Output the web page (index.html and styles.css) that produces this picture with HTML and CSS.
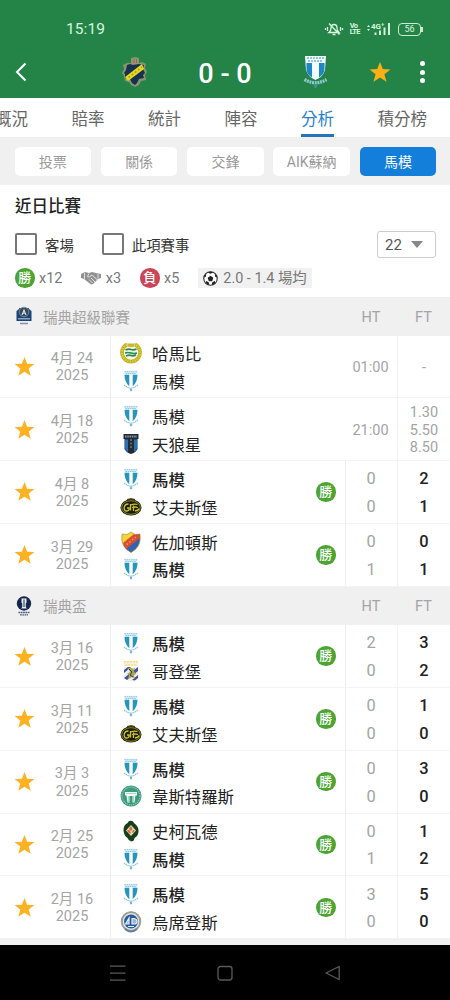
FILE: index.html
```html
<!DOCTYPE html>
<html lang="zh-Hant">
<head>
    <meta charset="UTF-8">
    <meta content="width=device-width, initial-scale=1.0" name="viewport">
    <title>分析</title>
    <link rel="stylesheet" href="styles.css">
</head>
<body>
<svg class="sprite">
    <symbol id="star" viewBox="0 0 24 24">
        <path d="M12 1l3 7.8 8.4.4-6.6 5.2 2.3 8.1L12 17.900l-7.100 4.600 2.300-8.100L.6 9.200 9 8.800z"/>
    </symbol>
    <symbol id="malmo" viewBox="0 0 22 22">
        <path d="M4 .8h14l-1 4H5z" fill="#e4f3fa"/>
        <path d="M4.500 1.800h13M5.500 3.600h11" stroke="#63b3d6" stroke-width=".8" stroke-dasharray="1.500 .7"/>
        <path d="M4 4.500h14q.3 8.500-7 13Q3.700 13 4 4.500z" fill="#fff"/>
        <path d="M4.500 4.800h4.800v11.400Q4.500 12.500 4.500 4.800zM12.700 4.800h4.800q0 7.700-4.800 11.400z" fill="#2795ba"/>
        <path d="M4 15q7 6 14 0" fill="none" stroke="#86c2dc" stroke-width="1.200" stroke-dasharray="1.400 .6"/>
        <path d="M11 18.300v3M9.800 20h2.400" stroke="#4b9fc6"/>
    </symbol>
    <symbol id="hammarby" viewBox="0 0 22 22">
        <path d="M7 2.500A9 9 0 1 0 15 2.500" fill="none" stroke="#bdae20" stroke-width="3.800"/>
        <path d="M7 2.500A9 9 0 1 0 15 2.500" fill="none" stroke="#d8cb45" stroke-width="2.600" stroke-dasharray="1.500 1"/>
        <circle cx="11" cy="10.500" r="6.400" fill="#f3f5df"/>
        <path d="M5.500 8q3-1.500 5.500-.5t5.500-.5M5 11q3-1 6 0t6 0M6 14q3-1.500 5-.5t5-.5" fill="none" stroke="#268957" stroke-width="1.700"/>
        <path d="M7 1.500h8l-1.500 3.500h-5z" fill="#c7b82d"/>
    </symbol>
    <symbol id="sirius" viewBox="0 0 22 22">
        <path d="M3.500 1h15v5h-1v10q-2 4-6.500 5-4.500-1-6.500-5V6h-1z" fill="#222c38"/>
        <path d="M5 6.500h3v12.500Q5 17.500 5 15zM14 6.500h3V15q0 2.500-3 4z" fill="#2770ba"/>
        <path d="M5 3.500h12" stroke="#8d9aa5" stroke-width="1.800" stroke-dasharray="1.500 .8"/>
        <path d="M11 6v10" stroke="#7a7465" stroke-width="1.500" stroke-dasharray="2 1.500"/>
    </symbol>
    <symbol id="elfsborg" viewBox="0 0 22 22">
        <path d="M7 3l4-1 4 1v3H7z" fill="#504d12"/>
        <ellipse cx="11" cy="11.500" rx="10.500" ry="8" fill="#1b1d0b"/>
        <ellipse cx="11" cy="11.500" rx="9.300" ry="6.800" fill="none" stroke="#a9a32b" stroke-width=".8"/>
        <path d="M8.500 8C3 8 3 15.500 7 15q2.500-.3 2-3H7M10.500 8v6.500M10.500 9q4-1.500 7-.5M12 11.500q3-1 6 0M13.500 15V9.500m1.500 5.500q3.500-.5 4-2.500" fill="none" stroke="#cdc430" stroke-width="1.300"/>
    </symbol>
    <symbol id="djurgarden" viewBox="0 0 22 22">
        <path d="M2 3l5 .5L11 1l4 2.500 5-.5q2 13-9 18.500Q0 16 2 3z" fill="#f5d72f"/>
        <path d="M20 6q.5 10-9 15.500Q6.500 19 4.500 15.500z" fill="#2e64b0"/>
        <path d="M14 3l1 .5 5-.5v4L6 18Q3.500 15 3 12z" fill="#dc4b33"/>
        <path d="M6.500 13.500L16 6" stroke="#e8a046" stroke-width="1.600" stroke-dasharray="1.500 2"/>
        <path d="M2 3l5 .5L11 1l4 2.500 5-.5q2 13-9 18.500Q0 16 2 3z" fill="none" stroke="#9a7c45" stroke-width=".6"/>
    </symbol>
    <symbol id="goteborg" viewBox="0 0 22 22">
        <path d="M4 1h14v5H4z" fill="#fbf3cf"/>
        <path d="M4 1.800h14M5 5h12" stroke="#ecd07c" stroke-width="1" stroke-dasharray="2 1"/>
        <path d="M4 7h14v10q-1 3-7 4-6-1-7-4z" fill="#eef0f8"/>
        <path d="M4 10l4-3h3l-7 6zM4 18l14-11v4L7 20zM12 20l6-5v3l-3 2.500z" fill="#41519b"/>
        <path d="M8 8q3-1 5 1l2-1-1 3 2 3-2 1 1 4-3-2-4 2 1-4-2-1 3-2z" fill="#a9a64c"/>
        <path d="M9 9l3 3-2 3 3 2" fill="none" stroke="#39405c"/>
    </symbol>
    <symbol id="vsk" viewBox="0 0 22 22">
        <circle cx="11" cy="11" r="10.500" fill="#3d9b7d"/>
        <circle cx="11" cy="11" r="8.900" fill="none" stroke="#8fc9b3" stroke-width="1.300" stroke-dasharray="1.200 .9"/>
        <path d="M5 7h12v3.500h-1.500l-1 7h-2v-6.500h-3v6.500h-2l-1-7H5z" fill="#f1faf6"/>
        <path d="M6 8.500h10M8.500 11v6M13.500 11v6" stroke="#8ac5b0" stroke-width=".7"/>
    </symbol>
    <symbol id="skovde" viewBox="0 0 22 22">
        <path d="M9 1q4-1 5 2 4.500 3 4.500 8t-4 7q0 3-3 3.500-3-.5-4-3.500-4-3-4-8t4-7z" fill="#164018"/>
        <path d="M11 5l5 5.500-5 5.500-5-5.500z" fill="#e8d4b5"/>
        <path d="M11 6l1.500 3-1.500 2-2-2zM13 10l2 .5-2 2.500-1-1zM7 10h2.500l1.500 3-2 .5z" fill="#cf6e43"/>
    </symbol>
    <symbol id="orebro" viewBox="0 0 22 22">
        <circle cx="11" cy="10.500" r="9.300" fill="#dfe3e6" stroke="#8798a9" stroke-width="1.800"/>
        <circle cx="11" cy="10.500" r="9.500" fill="none" stroke="#bda66b" stroke-width="1.200" stroke-dasharray="2 2"/>
        <circle cx="11" cy="10.500" r="6.900" fill="#285999"/>
        <path d="M5.500 13L9 7v6zM12 7.500h2q3 .5 3 3t-3 2.500h-2zM8 15.500h6" fill="#9db4d2" stroke="#e7edf5" stroke-width="1.200"/>
        <path d="M5 18q6 5 12 0" fill="none" stroke="#69809b" stroke-width="2"/>
    </symbol>
</svg>

<div class="header">
    <div class="status">
        <span class="clock">15:19</span>
        <svg class="silent" viewBox="0 0 20 14" width="20" height="14">
            <path d="M5 10.500q2-1.500 2-4.500 0-3.500 3-3.500t3 3.500q0 3 2 4.500zM8.500 12.500h3M5 1.500l10.500 11M3.500 5v4M1.500 6v2M16.500 5v4M18.500 6v2" fill="none" stroke="currentColor" stroke-width="1.300"/>
        </svg>
        <span class="volte">Vo<br>LTE</span>
        <svg class="signal" viewBox="0 0 25 14" width="25" height="14">
            <path d="M1 5l1.500-2L4 5M1 7l1.500 2L4 7" fill="currentColor"/>
            <text x="5" y="7" class="net">4G⁺</text>
            <path d="M9.500 10.500V13M14 8.500V13M18.500 5.500V13M23 1v12" stroke="currentColor" stroke-width="1.900"/>
        </svg>
        <span class="battery">56</span>
    </div>
    <div class="scorebar">
        <svg class="back" viewBox="0 0 12 20"><path d="M10.500 1.500L2 10l8.500 8.500" fill="none" stroke="#fff" stroke-width="2"/></svg>
        <svg class="crest aik" viewBox="0 0 26 32">
            <path d="M9 7V2l4-1 4 1v5l3-1 4 2-1 4 2 4-2 3 1 5-5 1-2 4-4 2-4-2-2-3-4-1-1-5-2-3 2-4-1-4 4-2z" fill="#86956f"/>
            <path d="M5 9l3-1 3 1 6-1 5 1-1 4 2 4-2 2 1 3-5 1-2 4-2 2-3-2-2-4-5-1 0-4-1-1 2-3z" fill="#17304e"/>
            <path d="M3 21L20 8l2 5L6 25z" fill="#e6d922"/>
            <path d="M6.500 21.500L20 11" stroke="#a99f1d" stroke-width="1.600" stroke-dasharray="2 2"/>
            <path d="M10 3h6v5h-6z" fill="#a59171"/>
            <path d="M12 3v4M14.500 3v4" stroke="#79664c" stroke-width=".8"/>
        </svg>
        <div class="score">0 - 0</div>
        <svg class="crest mff" viewBox="0 0 26 34">
            <path d="M3 1h21l-1 14q-2 7-9.500 10Q6 22 4 15z" fill="#f4fbff"/>
            <path d="M4.500 8H10v14.500Q4.500 19.500 4.500 14zM17 8h5.500v6q-.5 5.500-5.500 8.500z" fill="#1d86c5"/>
            <path d="M5 3h17M6 6h15" stroke="#6cb5da" stroke-width="1.500" stroke-dasharray="2 1"/>
            <path d="M2.500 24.500q11 6.500 22 0" fill="none" stroke="#8dc8d0" stroke-width="3.200" stroke-dasharray="2 .7"/>
            <path d="M11.500 29h4l-1 4h-2z" fill="#3d958f"/>
        </svg>
        <svg class="fav"><use href="#star"/></svg>
        <div class="more"><i></i><i></i><i></i></div>
    </div>
</div>

<div class="tabs">
    <span>概況</span><span>賠率</span><span>統計</span><span>陣容</span><span class="on">分析</span><span>積分榜</span>
</div>

<div class="subtabs">
    <span>投票</span><span>關係</span><span>交鋒</span><span>AIK蘇納</span><span class="on">馬模</span>
</div>

<div class="filters">
    <h2>近日比賽</h2>
    <div class="options">
        <label class="check home"><i></i>客場</label>
        <label class="check"><i></i>此項賽事</label>
        <div class="select">22<i></i></div>
    </div>
    <div class="totals">
        <span class="badge">勝</span><span class="count">x12</span>
        <svg class="shake" viewBox="0 0 20 14">
            <path d="M0 3l4-2 4 1 3-1 4 1 5 1v4l-3 1-5 5-2 .5L3 8 0 7z" fill="#919191"/>
            <path d="M8 2.500L6.500 5.500l2 .5 2.500-2 5.500 5M10 7l4 4M8 8.500l3.500 3.500M3.500 2v6M17 2.500v5" fill="none" stroke="#f2f2f2" stroke-width=".8"/>
        </svg>
        <span class="count">x3</span>
        <span class="badge lose">負</span><span class="count">x5</span>
        <div class="average">
            <svg viewBox="0 0 16 16">
                <circle cx="8" cy="8" r="7.200" fill="#fff" stroke="#333" stroke-width="1.200"/>
                <path d="M8 5l3 2.200L9.800 11H6.200L5 7.200zM5 1.500L8 3l3-1.500L8 .5zM1 7l2-1 .5-3L1.500 5zM15 7l-2-1-.5-3 2 2zM3 13l.5-2.500 3 2V15zM13 13l-.5-2.500-3 2V15z" fill="#222"/>
            </svg>
            <span>2.0 - 1.4 場均</span>
        </div>
    </div>
</div>

<div class="league">
    <svg viewBox="0 0 18 20">
        <path d="M1.500 5q2-1 3-3h9q1 2 3 3v10h-15z" fill="#1d4277"/>
        <circle cx="9" cy="6" r="4.800" fill="#34465a" stroke="#8798a5" stroke-width=".8"/>
        <path d="M7 9l2-5 2 5M7.800 7.300h2.400" fill="none" stroke="#dce4e8" stroke-width="1.100"/>
        <path d="M3 12.800h12" stroke="#a5bbd6" stroke-width="1.200"/>
        <path d="M5 17.500h8" stroke="#8792a0" stroke-width="1.500"/>
    </svg>
    <span class="name">瑞典超級聯賽</span><span class="ht">HT</span><span class="ft">FT</span>
</div>
<div id="allsvenskan"></div>

<div class="league">
    <svg viewBox="0 0 18 20">
        <circle cx="9" cy="7.500" r="7.200" fill="#14284c"/>
        <path d="M6.500 2.500h5v4L10.800 7.500V11l1 1.500H6.200l1-1.500V7.500l-.7-1z" fill="#e9eef4"/>
        <path d="M9 3.500V11" stroke="#14284c" stroke-width="1"/>
        <path d="M3.500 16.500h11M5 18.800h8" stroke="#4c5f7e" stroke-width="1.300" stroke-dasharray="1.800 .5"/>
    </svg>
    <span class="name">瑞典盃</span><span class="ht">HT</span><span class="ft">FT</span>
</div>
<div id="cup"></div>
<div class="gap"></div>

<div class="navbar">
    <svg viewBox="0 0 16 16"><path d="M0 1.200h15.500M0 8.200h15.500M0 15.200h15.500"/></svg>
    <svg viewBox="0 0 16 16"><rect x="1" y="1.500" width="14" height="13.500" rx="2.500"/></svg>
    <svg viewBox="0 0 16 16"><path d="M14.200 1.500v13L1 8z" stroke-linejoin="round"/></svg>
</div>

<script>
    const names = {
        malmo: "馬模",
        hammarby: "哈馬比",
        sirius: "天狼星",
        elfsborg: "艾夫斯堡",
        djurgarden: "佐加頓斯",
        goteborg: "哥登堡",
        vsk: "韋斯特羅斯",
        skovde: "史柯瓦德",
        orebro: "烏席登斯"
    };

    const league = [
        {date: "4月 24", teams: ["hammarby", "malmo"], time: "01:00", odds: ["-"]},
        {date: "4月 18", teams: ["malmo", "sirius"], time: "21:00", odds: ["1.30", "5.50", "8.50"]},
        {date: "4月 8", teams: ["malmo", "elfsborg"], ht: [0, 0], ft: [2, 1]},
        {date: "3月 29", teams: ["djurgarden", "malmo"], ht: [0, 1], ft: [0, 1]}
    ];

    const cup = [
        {date: "3月 16", teams: ["malmo", "goteborg"], ht: [2, 0], ft: [3, 2]},
        {date: "3月 11", teams: ["malmo", "elfsborg"], ht: [0, 0], ft: [1, 0]},
        {date: "3月 3", teams: ["malmo", "vsk"], ht: [0, 0], ft: [3, 0]},
        {date: "2月 25", teams: ["skovde", "malmo"], ht: [0, 1], ft: [1, 2]},
        {date: "2月 16", teams: ["malmo", "orebro"], ht: [3, 0], ft: [5, 0]}
    ];

    function lines(items) {
        return items.map(item => `<div>${item}</div>`).join("");
    }

    function matchRow(match) {
        const played = !!match.ft;
        const teams = match.teams.map(id => {
            const bold = played && id === "malmo" ? " bold" : "";
            return `<div class="team${bold}"><svg><use href="#${id}"/></svg>${names[id]}</div>`;
        }).join("");
        return `<div class="match">
            <svg class="star"><use href="#star"/></svg>
            <div class="date">${lines([match.date, "2025"])}</div>
            <div class="teams">${teams}</div>
            ${played ? '<span class="badge">勝</span>' : ""}
            <div class="half${played ? " played" : ""}">${played ? lines(match.ht) : match.time}</div>
            <div class="full${played ? " played" : ""}">${lines(played ? match.ft : match.odds)}</div>
        </div>`;
    }

    document.getElementById("allsvenskan").innerHTML = league.map(matchRow).join("");
    document.getElementById("cup").innerHTML = cup.map(matchRow).join("");
</script>
</body>
</html>
```

FILE: styles.css
```css
* {
    box-sizing: border-box;
}

body {
    margin: 0;
    width: 450px;
    height: 1000px;
    overflow: hidden;
    display: flex;
    flex-direction: column;
    font-family: Roboto, "Noto Sans CJK TC", sans-serif;
    color: #222;
    background: #fff;
}

.sprite {
    display: none;
}

svg {
    display: block;
    flex: none;
}

.header {
    flex: none;
    height: 98px;
    background: #248448;
    color: #fff;
}

.status {
    display: flex;
    align-items: center;
    height: 44px;
    padding: 14px 29px 0 66px;
    color: #d9f6df;
}

.clock {
    margin-right: auto;
    font-size: 15.5px;
    letter-spacing: 0.1px;
}

.silent {
    margin-right: 6px;
}

.volte {
    margin-right: 6px;
    font-size: 7.5px;
    line-height: 6.5px;
    font-weight: bold;
    letter-spacing: -0.6px;
}

.signal {
    margin-right: 7px;
}

.net {
    font-size: 8px;
    font-weight: bold;
    fill: currentColor;
}

.battery {
    position: relative;
    width: 23px;
    height: 13px;
    border: 1.5px solid #c8ecd0;
    border-radius: 4px;
    font-size: 9px;
    line-height: 11px;
    text-align: center;
}

.battery::after {
    content: "";
    position: absolute;
    right: -3px;
    top: 3px;
    width: 2px;
    height: 5px;
    background: #c8ecd0;
}

.scorebar {
    display: flex;
    align-items: center;
    height: 54px;
    padding: 2px 0 0 15px;
}

.back {
    width: 12px;
    height: 20px;
}

.crest {
    width: 26px;
    height: 32px;
}

.aik {
    margin-left: 95px;
}

.score {
    width: 154px;
    padding-top: 3px;
    text-align: center;
    font-size: 27px;
    font-weight: 500;
    line-height: 30px;
}

.mff {
    height: 34px;
}

.fav {
    width: 22px;
    height: 22px;
    margin-left: 41px;
    fill: #fdb015;
}

.more {
    display: flex;
    flex-direction: column;
    gap: 3.5px;
    margin-left: 29px;
}

.more i {
    width: 5px;
    height: 5px;
    border-radius: 50%;
    background: #fff;
}

.tabs {
    flex: none;
    display: flex;
    gap: 43.5px;
    height: 39px;
    padding-top: 4px;
    margin-left: -5px;
    font-size: 16.5px;
    line-height: 36px;
    color: #666;
    white-space: nowrap;
}

.tabs .on {
    height: 35px;
    color: #2782cf;
    border-bottom: 3px solid #2576b8;
}

.subtabs {
    flex: none;
    display: flex;
    gap: 9.6px;
    height: 48px;
    padding: 10px 0 0 14.5px;
    background: #f0f0f0;
}

.subtabs span {
    width: 76.7px;
    height: 29px;
    border-radius: 5px;
    background: #fff;
    font-size: 14px;
    line-height: 30px;
    text-align: center;
    color: #999;
}

.subtabs .on {
    background: #147fda;
    color: #fff;
}

.filters {
    flex: none;
    height: 112px;
    padding-left: 15px;
}

h2 {
    margin: 0;
    padding-top: 11px;
    font-size: 16.5px;
    line-height: 22px;
    font-weight: 500;
}

.options {
    display: flex;
    align-items: center;
    height: 26px;
    margin-top: 13px;
    padding-right: 14px;
    font-size: 14.4px;
}

.check {
    display: flex;
    align-items: center;
    gap: 8px;
    color: #333;
}

.check i {
    width: 22px;
    height: 22px;
    border: 2px solid #777;
    border-radius: 2px;
}

.home {
    margin-right: 28px;
}

.select {
    display: flex;
    align-items: center;
    justify-content: space-between;
    width: 59px;
    height: 27px;
    margin-left: auto;
    padding: 1px 12px 0 7px;
    border: 1px solid #ccc;
    border-radius: 3px;
    font-size: 15px;
    color: #555;
}

.select i {
    border: 6px solid transparent;
    border-top: 7px solid #888;
    border-bottom: 0;
}

.totals {
    display: flex;
    align-items: center;
    height: 20px;
    margin-top: 11px;
    font-size: 14.4px;
    color: #777;
}

.badge {
    flex: none;
    width: 19.5px;
    height: 19.5px;
    border-radius: 50%;
    background: #4ca432;
    color: #fff;
    font-size: 13px;
    line-height: 19px;
    text-align: center;
    font-weight: 500;
}

.lose {
    background: #cb4659;
}

.count {
    margin: 0 19px 0 4.5px;
}

.shake {
    width: 20px;
    height: 14px;
}

.average {
    display: flex;
    align-items: center;
    gap: 5px;
    height: 20px;
    padding: 0 5px;
    background: #f1f1f1;
    white-space: nowrap;
}

.average span {
    padding-bottom: 3px;
}

.average svg {
    width: 15px;
    height: 15px;
}

.league {
    flex: none;
    display: flex;
    align-items: center;
    height: 38.5px;
    padding-left: 15px;
    background: #f0f0f0;
    font-size: 14.5px;
    color: #a4a4a4;
}

.league svg {
    width: 18px;
    height: 20px;
    margin-right: 10px;
}

.league .name {
    flex: 1;
}

.league .ht,
.league .ft {
    padding-top: 2px;
    text-align: center;
}

.league .ht {
    width: 52px;
}

.league .ft {
    width: 53px;
}

.match {
    display: flex;
    align-items: center;
    height: 62.8px;
    border-bottom: 1px solid #f3f3f3;
}

.star {
    width: 21px;
    height: 21px;
    margin-left: 13.5px;
    fill: #fdb222;
}

.date {
    width: 75px;
    padding-top: 2px;
    text-align: center;
    font-size: 14.5px;
    line-height: 17.2px;
    color: #a4a4a4;
}

.teams {
    flex: 1;
    align-self: stretch;
    padding: 4px 0 0 9.5px;
    border-left: 1px solid #eee;
}

.team {
    display: flex;
    align-items: center;
    gap: 10px;
    height: 27.7px;
    font-size: 16.4px;
    color: #222;
}

.team svg {
    width: 22px;
    height: 22px;
}

.bold {
    font-weight: 500;
}

.match .badge {
    margin-right: 9.5px;
}

.half,
.full {
    display: flex;
    flex-direction: column;
    justify-content: center;
    align-self: stretch;
    padding-top: 2px;
    text-align: center;
    font-size: 14.5px;
    line-height: 17.2px;
    color: #a4a4a4;
}

.half {
    width: 52px;
    padding-right: 1px;
}

.full {
    width: 53px;
    border-left: 1px solid #f1f1f1;
}

.half.played {
    border-left: 1px solid #eee;
}

.played {
    font-size: 16.4px;
    line-height: 27.6px;
}

.full.played {
    font-weight: 500;
    color: #222;
}

.gap {
    flex: 1;
    background: #f0f0f0;
}

.navbar {
    flex: none;
    display: flex;
    align-items: center;
    justify-content: center;
    gap: 91.5px;
    height: 55px;
    background: #000;
}

.navbar svg {
    width: 16px;
    height: 16px;
    fill: none;
    stroke: #5a5a5a;
    stroke-width: 1.3;
}
```
